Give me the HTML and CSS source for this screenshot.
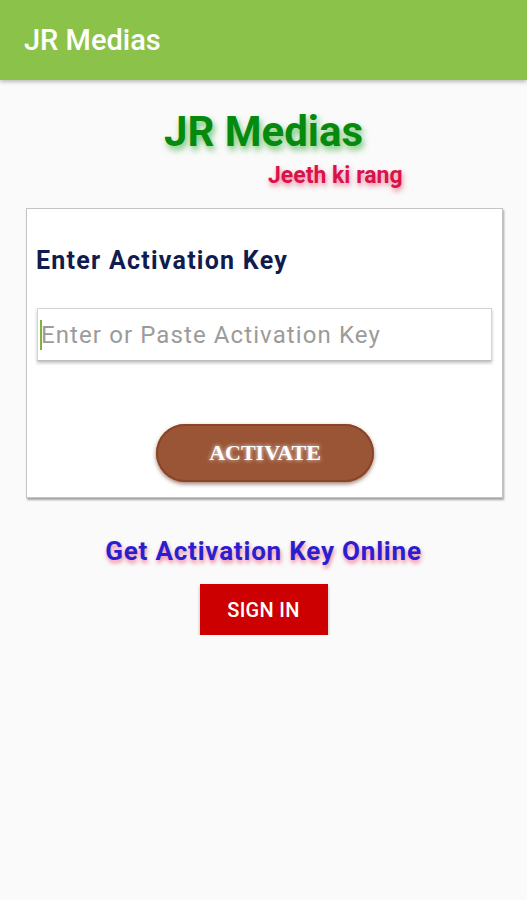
FILE: index.html
```html
<!DOCTYPE html>
<html>
<head>
<meta charset="utf-8">
<link rel="stylesheet" href="styles.css">
</head>
<body>
<header class="appbar"><span class="appbar-title">JR Medias</span></header>
<main class="content">
  <h1 class="brand">JR Medias</h1>
  <div class="tagline"><span>Jeeth ki rang</span></div>
  <section class="card">
    <h2 class="card-title">Enter Activation Key</h2>
    <div class="field">
      <input class="key-input" type="text" placeholder="Enter or Paste Activation Key">
      <span class="caret"></span>
    </div>
    <div class="btn-row"><button class="activate">ACTIVATE</button></div>
  </section>
  <p class="online">Get Activation Key Online</p>
  <button class="signin">SIGN IN</button>
</main>
</body>
</html>
```
FILE: styles.css
```css
html, body {
  margin: 0;
  padding: 0;
  background: #fafafa;
  font-family: Roboto, "Liberation Sans", sans-serif;
}
.appbar {
  height: 80px;
  background: #8bc34a;
  display: flex;
  align-items: center;
  padding-left: 24px;
  box-shadow: 0 2px 4px rgba(0,0,0,0.25);
  position: relative;
  z-index: 1;
}
.appbar-title {
  color: #fff;
  font-size: 29px;
  font-weight: 500;
  margin-top: -1px;
}
.content {
  display: flex;
  flex-direction: column;
  align-items: center;
}
.brand {
  margin: 28px 0 0;
  font-size: 42px;
  font-weight: 700;
  line-height: 48px;
  color: #068a0e;
  text-shadow: 2px 4px 6px rgba(0,150,0,0.55);
}
.tagline {
  align-self: stretch;
  padding-left: 268px;
  margin-top: 7px;
  line-height: 26px;
}
.tagline span {
  font-size: 23px;
  font-weight: 700;
  color: #d9134a;
  text-shadow: 1px 3px 5px rgba(220,20,60,0.5);
}
.card {
  align-self: stretch;
  margin: 17px 24px 0 26px;
  background: #fff;
  border: 1px solid #c4c4c4;
  box-shadow: 1px 2px 2px rgba(0,0,0,0.35);
  padding: 32px 10px 15px 9px;
}
.card-title {
  margin: 0;
  font-size: 25px;
  font-weight: 700;
  letter-spacing: 1.25px;
  line-height: 40px;
  color: #101c4e;
}
.field {
  position: relative;
  margin: 27px 0 0 1px;
}
.key-input {
  box-sizing: border-box;
  width: 100%;
  height: 53px;
  border: 1px solid #d4d4d4;
  border-bottom-color: #bdbdbd;
  box-shadow: 0 2px 3px rgba(0,0,0,0.25);
  background: #fff;
  padding: 0 0 0 3px;
  font-family: Roboto, "Liberation Sans", sans-serif;
  font-size: 24px;
  letter-spacing: 1.1px;
  color: #333;
  outline: none;
}
.key-input::placeholder {
  color: #9b9b9b;
}
.caret {
  position: absolute;
  left: 3px;
  top: 12px;
  width: 2px;
  height: 30px;
  background: #7cb342;
}
.btn-row {
  display: flex;
  justify-content: center;
  margin-top: 63px;
  padding-left: 2px;
}
.activate {
  width: 218px;
  height: 58px;
  border-radius: 29px;
  border: none;
  background: #9a5536;
  box-shadow: 0 2px 4px rgba(90,40,20,0.6), inset 0 0 0 2px #8a4528;
  color: #fff;
  font-family: "Liberation Serif", "DejaVu Serif", serif;
  font-weight: 700;
  font-size: 22px;
  text-shadow: 0 0 4px rgba(255,255,255,0.9);
  padding: 0;
}
.online {
  margin: 37px 0 0;
  font-size: 26px;
  font-weight: 700;
  letter-spacing: 0.8px;
  line-height: 32px;
  color: #2a1fd0;
  text-shadow: 1px 3px 4px rgba(230,30,80,0.55);
}
.signin {
  margin-top: 17px;
  width: 128px;
  height: 51px;
  border: none;
  background: #cc0000;
  color: #fff;
  font-family: Roboto, "Liberation Sans", sans-serif;
  font-weight: 500;
  font-size: 20px;
  letter-spacing: 0.3px;
  box-shadow: 0 2px 3px rgba(0,0,0,0.3);
  padding: 0;
}
```
